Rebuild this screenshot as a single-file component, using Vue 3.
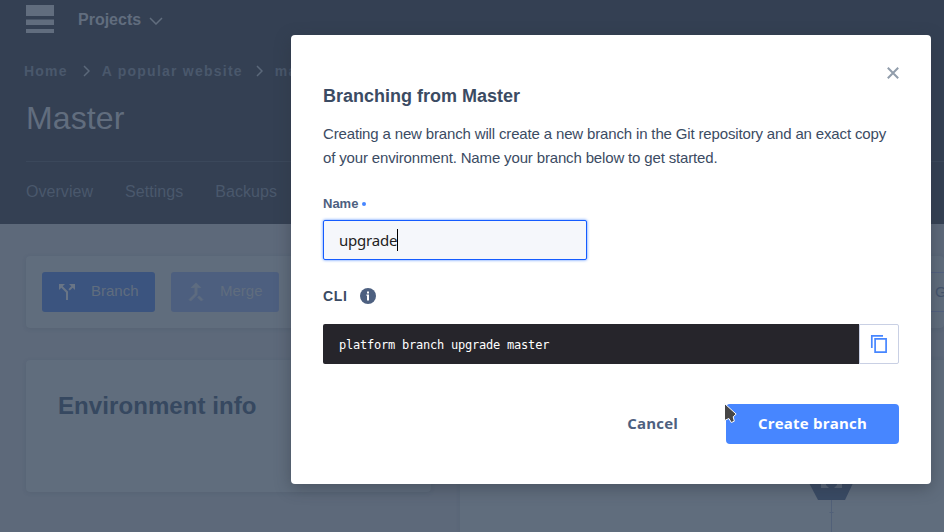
<script setup>
import { ref, computed } from 'vue'

const branchName = ref('upgrade')
const command = computed(() => `platform branch ${branchName.value} master`)
const tabs = ['Overview', 'Settings', 'Backups']
</script>

<template>
  <div class="page">
    <header class="header">
      <div class="topbar">
        <svg class="logo" width="28" height="28" viewBox="0 0 28 28"><path d="M0 0h28v11H0zM0 14.5h28v5.5H0zM0 24h28v4H0z" /></svg>
        <span class="projects">Projects</span>
        <svg class="chev" width="14" height="8" viewBox="0 0 14 8"><path d="M1 1l6 6 6-6" /></svg>
      </div>
      <nav class="crumbs">
        <span class="home">Home</span>
        <svg class="sep" width="7" height="12" viewBox="0 0 7 12"><path d="M1 1l5 5-5 5" /></svg>
        <span class="site">A popular website</span>
        <svg class="sep" width="7" height="12" viewBox="0 0 7 12"><path d="M1 1l5 5-5 5" /></svg>
        <span>master</span>
      </nav>
      <h1>Master</h1>
      <nav class="tabs">
        <span v-for="t in tabs" :key="t">{{ t }}</span>
      </nav>
    </header>

    <main class="content">
      <section class="card actions">
        <div class="action">
          <svg width="24" height="24" viewBox="0 0 24 24"><path d="M14 4l2.29 2.29-2.88 2.88 1.42 1.42 2.88-2.88L20 10V4zM10 4H4v6l2.29-2.29 4.71 4.7V20h2v-8.41l-5.29-5.3z" /></svg>
          <span>Branch</span>
        </div>
        <div class="action merge">
          <svg width="26" height="26" viewBox="0 0 24 24"><path d="M17 20.41L18.41 19 15 15.59 13.59 17 17 20.41zM7.5 8H11v5.59L5.59 19 7 20.41l6-6V8h3.5L12 3.5 7.5 8z" /></svg>
          <span>Merge</span>
        </div>
        <div class="git">G</div>
      </section>
      <div class="columns">
        <section class="card info"><h2>Environment info</h2></section>
        <section class="tree">
          <svg class="node" width="48" height="72" viewBox="0 0 48 72">
            <path class="hex" d="M11 0h27l9.5 20-9.5 20H11L.5 20z" />
            <path class="mark" d="M14 20h5v5l3 3h-8zM35 20h-5v5l-3 3h8z" />
            <path class="stem" d="M24.5 40v32M22.5 52.5h4" />
          </svg>
        </section>
      </div>
    </main>

    <div class="modal" role="dialog">
      <button class="close" aria-label="Close">
        <svg width="12" height="12" viewBox="0 0 12 12"><path d="M.8.8l10.4 10.4M11.2.8L.8 11.2" /></svg>
      </button>
      <h3>Branching from Master</h3>
      <p>Creating a new branch will create a new branch in the Git repository and an exact copy<br>of your environment. Name your branch below to get started.</p>
      <div class="label">Name <i></i></div>
      <div class="field"><span>{{ branchName }}</span><b class="caret"></b></div>
      <div class="cli">
        <span>CLI</span>
        <svg width="16" height="16" viewBox="0 0 16 16"><circle cx="8" cy="8" r="8" /><path d="M7 3.5h2v2H7zM6.4 6.5H9v6H7V7.7h-.6z" /></svg>
      </div>
      <div class="command">
        <code>{{ command }}</code>
        <button class="copy" aria-label="Copy">
          <svg width="18" height="20" viewBox="0 0 18 20"><path d="M1.8 14V1.8H13" /><path d="M5.1 4.9h11v13.3h-11z" /></svg>
        </button>
      </div>
      <div class="buttons">
        <button class="cancel">Cancel</button>
        <button class="create">Create branch</button>
      </div>
      <svg class="pointer" width="15" height="22" viewBox="0 0 15 22"><path d="M.5.5v17l4.4-2 2.4 4 3-1.3-1.1-4.4 3-2.7z" /></svg>
    </div>
  </div>
</template>

<style>
body { margin: 0; overflow: hidden; }
</style>

<style scoped>
* { box-sizing: border-box; }
.page { position: relative; width: 944px; height: 532px; overflow: hidden; background: #5d697a; font-family: "Liberation Sans", Arial, sans-serif; white-space: nowrap; }
h1, h2, h3, p { margin: 0; }
button { border: 0; padding: 0; background: none; }
.header { height: 224px; background: #344053; color: #4a586c; }
.topbar { height: 58px; padding: 5px 0 0 26px; display: flex; align-items: flex-start; }
.logo { fill: #616d7e; }
.projects { margin: 6px 0 0 24px; font-size: 16px; line-height: 18px; font-weight: 700; color: #616d7e; }
.chev { margin: 12px 0 0 8px; fill: none; stroke: #616d7e; stroke-width: 1.5; }
.crumbs { height: 26px; padding-left: 24px; display: flex; align-items: center; font-size: 14px; font-weight: 700; letter-spacing: 1.23px; }
.sep { fill: none; stroke: #5b687a; stroke-width: 1.5; }
.home + .sep { margin: 0 12px 0 15px; }
.site + .sep { margin: 0 12px 0 13px; }
h1 { margin-left: 26px; height: 77px; padding-top: 15px; font-size: 32px; line-height: 38px; font-weight: 400; letter-spacing: .1px; color: #616d7e; }
.tabs { margin-left: 26px; height: 62px; border-top: 1px solid #3b485b; display: flex; gap: 32px; padding-top: 20px; font-size: 16px; line-height: 20px; letter-spacing: .05px; }
.content { padding: 32px 0 0 26px; }
.card { background: #606d7d; border-radius: 4px; box-shadow: 0 1px 4px rgba(52, 64, 83, .14); }
.actions { height: 72px; padding: 16px; display: flex; gap: 16px; }
.action { width: 113px; height: 40px; border-radius: 3px; background: #3b547f; color: #606d7e; display: flex; align-items: center; padding: 0 0 0 13px; font-size: 15px; }
.action svg { fill: #697586; flex: none; }
.action span { margin: -3px 0 0 12px; }
.merge { width: 108px; background: #4d5f7f; padding-left: 12px; }
.merge svg { fill: #5e6c80; stroke: #5e6c80; stroke-width: .7; }
.merge span { margin-left: 11px; }
.git { margin: 0 -16px 0 auto; width: 48px; height: 40px; border: solid #536180; border-width: 1px 0; padding-left: 39px; line-height: 38px; font-family: "Liberation Sans", sans-serif; font-size: 15px; color: #44546d; }
.columns { margin-top: 32px; display: flex; gap: 29px; }
.info { width: 405px; height: 132px; padding: 29px 32px; }
h2 { font-size: 24px; line-height: 34px; color: #364860; letter-spacing: .08px; }
.tree { flex: 1; height: 172px; background: #606d7d; padding: 100px 0 0 347px; box-shadow: 0 0 4px rgba(52, 64, 83, .12); }
.node { display: block; }
.hex { fill: #394a64; }
.mark { fill: #5a677a; }
.stem { fill: none; stroke: #516078; stroke-width: 1; }

.modal { position: absolute; left: 291px; top: 35px; width: 640px; height: 449px; padding: 31px 32px 0; background: #fff; border-radius: 4px; box-shadow: 0 4px 16px rgba(44, 50, 62, .45); color: #3b4b63; display: flex; flex-direction: column; }
.close { width: 12px; height: 14px; align-self: flex-end; }
.close svg { display: block; fill: none; stroke: #919dab; stroke-width: 2; }
h3 { margin-top: 5px; font-size: 18px; line-height: 22px; }
p { margin-top: 15px; font-size: 15px; line-height: 24px; letter-spacing: -.153px; }
.label { margin-top: 25px; font-size: 13px; line-height: 18px; font-weight: 700; color: #4d6080; display: flex; align-items: center; gap: 4px; }
.label i { width: 4px; height: 4px; border-radius: 50%; background: #4786ff; }
.field { margin-top: 7px; width: 264px; height: 40px; border: 1px solid #145cff; border-radius: 2px; background: #f5f7fb; box-shadow: 0 0 3px #4786ff; padding-left: 15px; display: flex; align-items: center; font-family: "Noto Sans", sans-serif; font-size: 15px; letter-spacing: -.22px; color: #222; }
.caret { width: 1px; height: 22px; background: #000; }
.cli { margin-top: 26px; height: 20px; display: flex; align-items: center; gap: 12px; font-size: 14px; font-weight: 700; letter-spacing: .7px; }
.cli circle { fill: #4d6080; }
.cli path { fill: #fff; }
.command { margin-top: 18px; height: 40px; display: flex; }
code { width: 536px; background: #26252b; border-radius: 2px 0 0 2px; padding-left: 16px; color: #fff; font: 12px/42px "DejaVu Sans Mono", monospace; letter-spacing: -.22px; }
.copy { width: 40px; border: 1px solid #c9d0e4; border-radius: 0 2px 2px 0; display: flex; align-items: center; justify-content: center; }
.copy path { fill: none; stroke: #4786ff; stroke-width: 1.7; }
.buttons { margin-top: 40px; display: flex; justify-content: flex-end; gap: 48px; }
.buttons button { height: 40px; font: 700 15px/38px "Open Sans", sans-serif; letter-spacing: .2px; padding-bottom: 2px; }
.cancel { color: #4d6080; }
.create { width: 173px; color: #fff; background: #4786ff; border-radius: 4px; }
.pointer { position: absolute; left: 433px; top: 368px; }
.pointer path { fill: #464646; stroke: #fff; stroke-width: 1; }
</style>
